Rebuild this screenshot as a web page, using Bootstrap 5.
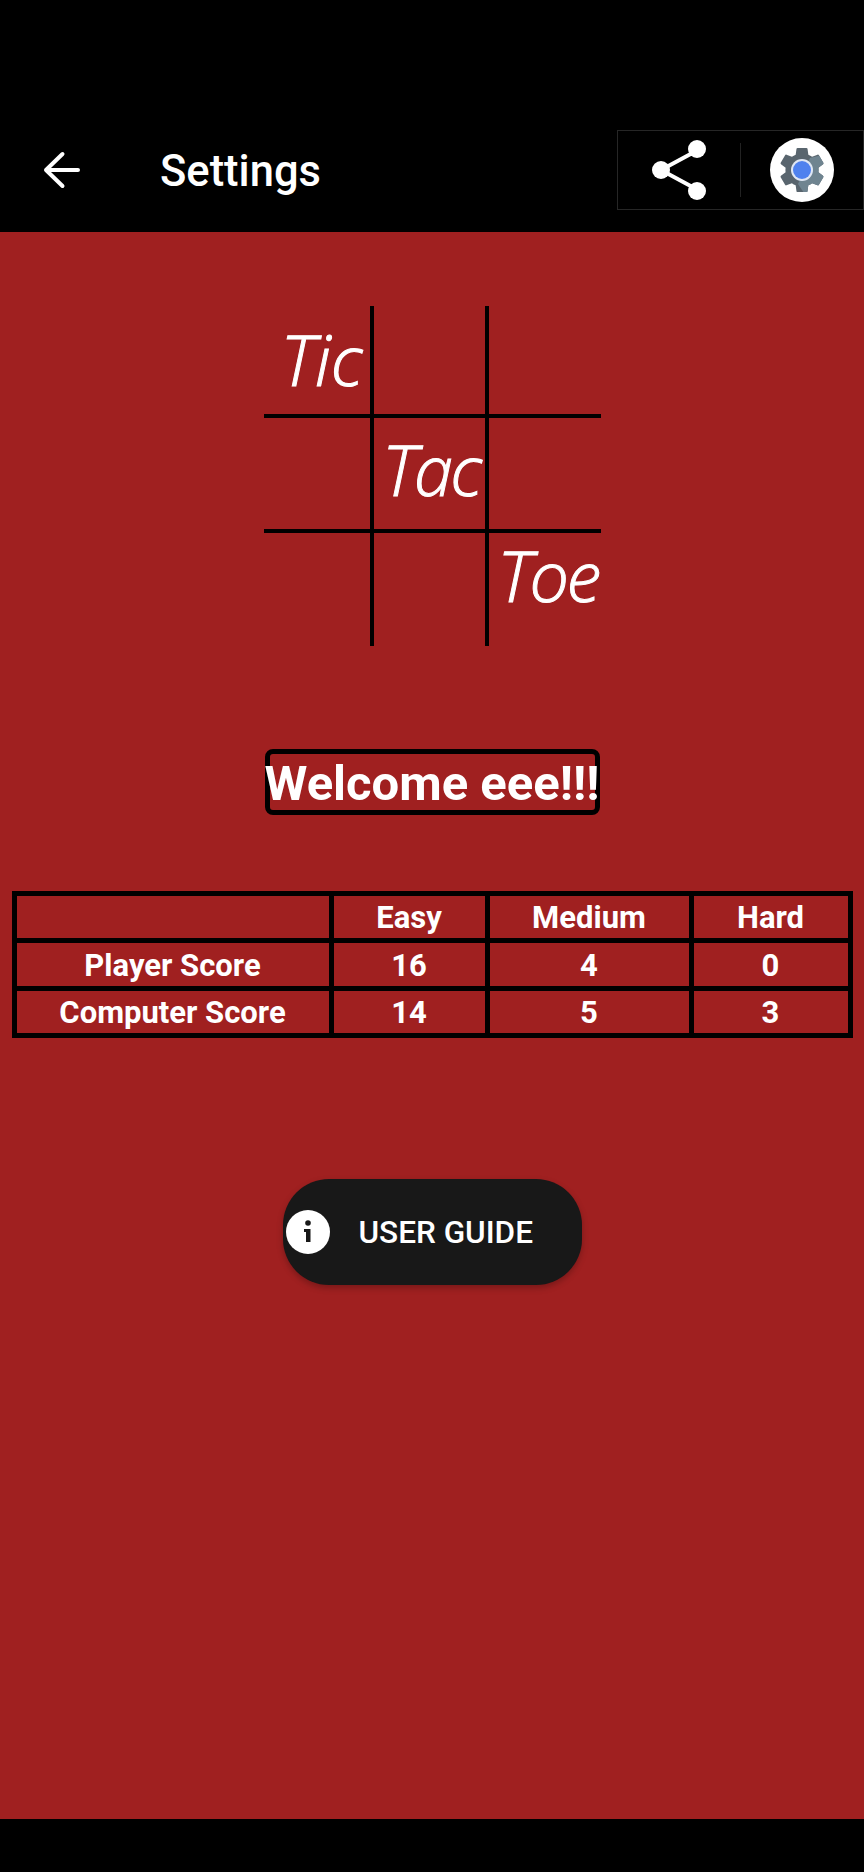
<!DOCTYPE html>
<html lang="en">
<head>
  <meta charset="UTF-8" />
  <meta name="viewport" content="width=device-width, initial-scale=1.0"/>
  <title>Settings</title>
  <link href="https://cdn.jsdelivr.net/npm/bootstrap@5.3.0/dist/css/bootstrap.min.css" rel="stylesheet">
  <style>
    body {
      background-color: #000;
      font-family: Roboto, "Liberation Sans", sans-serif;
      color: #fff;
      height: 1872px;
      overflow: hidden;
    }
    .app-header {
      height: 232px;
      padding-top: 130px;
    }
    .back-btn {
      width: 160px;
      height: 80px;
      padding-left: 42px;
    }
    .page-title {
      font-size: 43.500px;
      font-weight: 500;
      line-height: 84px;
      margin: 0;
    }
    .tool-box {
      width: 247px;
      height: 80px;
      border: 1px solid #262626;
    }
    .tool-share {
      width: 122px;
      padding-left: 33px;
    }
    .tool-divider {
      width: 1px;
      height: 54px;
      background-color: #222;
    }
    .tool-gear {
      padding-left: 29px;
    }
    .app-main {
      height: 1587px;
      background-color: #a02020;
    }
    .app-foot {
      height: 53px;
    }
    .logo-grid {
      width: 337px;
      height: 340px;
      margin-top: 74px;
      display: grid;
      grid-template-columns: 110px 115px 112px;
      grid-template-rows: 112px 114.5px 113.5px;
    }
    .logo-cell {
      display: flex;
      align-items: flex-end;
      justify-content: flex-end;
      font-family: "Open Sans", sans-serif;
      font-style: italic;
      font-weight: 300;
      font-size: 70px;
      line-height: 1;
      letter-spacing: -2.5px;
      -webkit-text-stroke: 1px #fff;
    }
    .logo-tic { padding: 0 7px 20px 0; letter-spacing: 0; }
    .logo-tac { padding: 0 5px 25px 0; }
    .logo-toe { padding: 0 2px 36px 0; }
    .line-r { border-right: 4px solid #000; }
    .line-b { border-bottom: 4px solid #000; }
    .welcome-box {
      width: 335px;
      height: 66px;
      margin-top: 103px;
      border: 5px solid #000;
      border-radius: 8px;
      font-size: 49px;
      font-weight: 700;
      line-height: 60px;
      white-space: nowrap;
    }
    .score-table {
      width: 836px;
      margin-top: 76px;
      border-collapse: collapse;
      table-layout: fixed;
      font-size: 31px;
      font-weight: 700;
      text-align: center;
    }
    .score-table td {
      border: 5px solid #000;
      height: 47.4px;
      padding: 2px 0 0;
      line-height: 40px;
    }
    .guide-btn {
      width: 299px;
      height: 106px;
      margin-top: 141px;
      padding: 0 0 0 3px;
      border: 0;
      border-radius: 46px;
      background-color: #181818;
      color: #fff;
      font-size: 31.5px;
      font-weight: 500;
      box-shadow: 0 3px 6px rgba(0, 0, 0, .25);
    }
    .guide-btn span {
      margin-left: 29px;
    }
  </style>
</head>
<body>
  <!-- Top bar -->
  <header class="app-header d-flex align-items-start">
    <div class="back-btn d-flex align-items-center">
      <svg width="38" height="38" viewBox="0 0 38 38" fill="none" stroke="#fff" stroke-width="4" stroke-linecap="round" stroke-linejoin="round">
        <path d="M36 19H4M20.500 3L4 19l16.500 16"/>
      </svg>
    </div>
    <h1 class="page-title flex-grow-1">Settings</h1>
    <div class="tool-box d-flex align-items-center">
      <div class="tool-share">
        <svg class="d-block" width="56" height="62" viewBox="0 0 56 62">
          <path d="M47 11L10 31l37 20" fill="none" stroke="#fff" stroke-width="4"/>
          <circle cx="46" cy="10" r="9" fill="#fff"/>
          <circle cx="10" cy="31" r="9" fill="#fff"/>
          <circle cx="46" cy="52" r="9" fill="#fff"/>
        </svg>
      </div>
      <div class="tool-divider"></div>
      <div class="tool-gear">
        <svg class="d-block" width="64" height="64" viewBox="0 0 64 64">
          <defs>
            <clipPath id="gearClip">
              <path transform="translate(4.400 4.400) scale(2.300)" d="M19.140 12.940c.04-.3.06-.61.06-.94 0-.32-.02-.64-.07-.94l2.030-1.580c.18-.14.23-.41.12-.61l-1.920-3.320c-.12-.22-.37-.29-.59-.22l-2.390.96c-.5-.38-1.030-.7-1.620-.94l-.36-2.540c-.04-.24-.24-.41-.48-.41h-3.840c-.24 0-.43.17-.47.41l-.36 2.540c-.59.24-1.130.57-1.620.94l-2.390-.96c-.22-.08-.47 0-.59.22L2.740 8.870c-.12.21-.08.47.12.61l2.030 1.580c-.05.3-.09.63-.09.94s.02.64.07.94l-2.030 1.580c-.18.14-.23.41-.12.61l1.920 3.320c.12.22.37.29.59.22l2.390-.96c.5.38 1.030.7 1.620.94l.36 2.540c.05.24.24.41.48.41h3.840c.24 0 .44-.17.47-.41l.36-2.540c.59-.24 1.130-.56 1.620-.94l2.390.96c.22.08.47 0 .59-.22l1.920-3.320c.12-.22.07-.47-.12-.61l-2.010-1.580z"/>
            </clipPath>
          </defs>
          <circle cx="32" cy="32" r="32" fill="#fff"/>
          <g clip-path="url(#gearClip)">
            <rect width="64" height="64" fill="#59656e"/>
            <path d="M40 20L64 14V64H40L28 46z" fill="#6f8490"/>
          </g>
          <circle cx="32" cy="32" r="11" fill="#dfe6f3"/>
          <circle cx="32" cy="32" r="9" fill="#4f81ee"/>
        </svg>
      </div>
    </div>
  </header>

  <main class="app-main d-flex flex-column align-items-center">
    <!-- Logo -->
    <div class="logo-grid">
      <div class="logo-cell logo-tic line-r line-b">Tic</div>
      <div class="logo-cell line-r line-b"></div>
      <div class="logo-cell line-b"></div>
      <div class="logo-cell line-r line-b"></div>
      <div class="logo-cell logo-tac line-r line-b">Tac</div>
      <div class="logo-cell line-b"></div>
      <div class="logo-cell line-r"></div>
      <div class="logo-cell line-r"></div>
      <div class="logo-cell logo-toe">Toe</div>
    </div>

    <div class="welcome-box d-flex justify-content-center">Welcome eee!!!</div>

    <table class="score-table">
      <colgroup>
        <col style="width: 317px">
        <col style="width: 156px">
        <col style="width: 204px">
        <col style="width: 159px">
      </colgroup>
      <tr><td></td><td>Easy</td><td>Medium</td><td>Hard</td></tr>
      <tr><td>Player Score</td><td>16</td><td>4</td><td>0</td></tr>
      <tr><td>Computer Score</td><td>14</td><td>5</td><td>3</td></tr>
    </table>

    <button type="button" class="guide-btn d-flex align-items-center">
      <svg width="44" height="44" viewBox="0 0 44 44" class="flex-shrink-0">
        <circle cx="22" cy="22" r="22" fill="#fff"/>
        <circle cx="22" cy="13" r="2.800" fill="#181818"/>
        <path d="M18 19h6.500v13H20V22h-2z" fill="#181818"/>
      </svg>
      <span>USER GUIDE</span>
    </button>
  </main>

  <div class="app-foot"></div>

  <script src="https://cdn.jsdelivr.net/npm/bootstrap@5.3.0/dist/js/bootstrap.bundle.min.js"></script>
</body>
</html>
